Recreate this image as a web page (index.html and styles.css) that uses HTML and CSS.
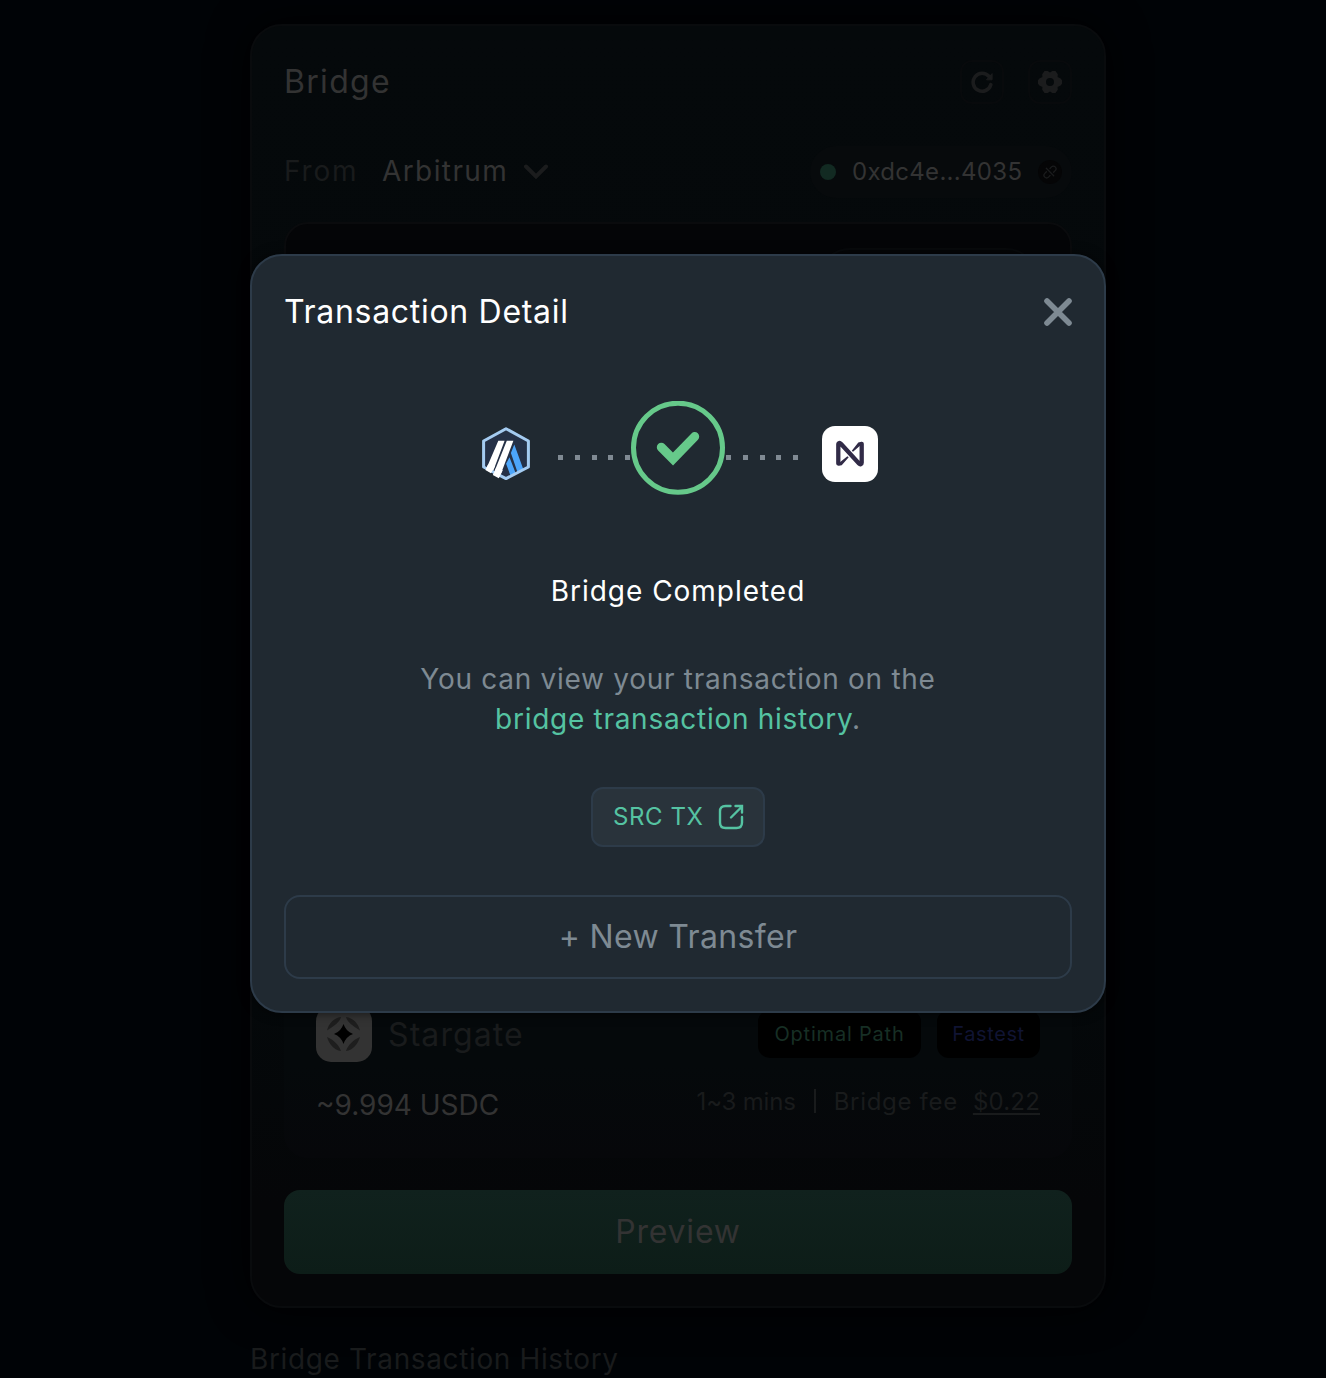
FILE: index.html
```html
<!DOCTYPE html>
<html lang="en">
<head>
<meta charset="utf-8">
<title>Bridge</title>
<link rel="stylesheet" href="styles.css">
</head>
<body>
<main class="page">
  <section class="card">
    <header class="card-head">
      <h1 class="card-title">Bridge</h1>
      <div class="tools">
        <button class="tool" aria-label="Refresh">
          <svg width="24" height="24" viewBox="0 0 24 24" fill="none" stroke="currentColor" stroke-width="3.6" stroke-linecap="round"><path d="M20.8 14.7A9 9 0 1 1 19.100 6.500"/><path d="M22.100 4v5.800h-5.200z" fill="currentColor" stroke-width="1" stroke-linejoin="round"/></svg>
        </button>
        <button class="tool" aria-label="Settings">
          <svg width="24" height="24" viewBox="0 0 24 24"><path fill="currentColor" fill-rule="evenodd" d="M6.5 1h3.2L12 2.4 14.3 1h3.2l2.3 3.2-.2 2.9 3 1.3L24 10.3v3.4l-1.4 1.9-3 1.3.2 2.9L17.500 23h-3.200L12 21.600 9.700 23H6.500l-2.300-3.200.2-2.900-3-1.300L0 13.700v-3.400l1.400-1.900 3-1.300-.2-2.900zM12 8a4 4 0 1 0 0 8 4 4 0 0 0 0-8z"/></svg>
        </button>
      </div>
    </header>
    <div class="from-row">
      <span class="from-label">From</span>
      <span class="chain">Arbitrum</span>
      <svg class="chevron" width="24" height="16" viewBox="0 0 24 16" fill="none" stroke="currentColor" stroke-width="4" stroke-linecap="round"><path d="M2 2.500l10 10 10-10"/></svg>
      <div class="wallet">
        <span class="online"></span>
        <span class="address">0xdc4e...4035</span>
        <span class="unlink"><svg width="14" height="14" viewBox="0 0 14 14" fill="none" stroke="currentColor" stroke-width="1.300" stroke-linecap="round"><path d="M7 3.500l1.500-1.600a2.600 2.600 0 0 1 3.700 3.700L10.600 7.200M7 10.500l-1.500 1.600a2.600 2.600 0 0 1-3.700-3.700L3.400 6.800M3.300 3.300l7.400 7.400"/></svg></span>
      </div>
    </div>
    <div class="amount-box"><div class="token-pill"></div></div>
    <article class="quote">
      <div class="quote-top">
        <span class="protocol">
          <svg width="56" height="56" viewBox="0 0 56 56"><rect width="56" height="56" rx="15" fill="#333"/><g fill="#1e1e1e"><path d="M11 24.500C13 17 18 12 25 11c-1 5-7 9-14 13.500zM44 24.500C42 17 37 12 30 11c1 5 7 9 14 13.500zM11 31c2 7 7 13 14 14-2-6-7-11-14-14zM44 31c-2 7-7 13-14 14 2-6 7-11 14-14z"/></g><path d="M27.500 18Q30 25.500 37 28Q30 30.500 27.500 38Q25 30.500 18 28Q25 25.500 27.500 18z" fill="#000"/></svg>
        </span>
        <span class="protocol-name">Stargate</span>
        <span class="tag tag-green">Optimal Path</span>
        <span class="tag tag-blue">Fastest</span>
      </div>
      <div class="quote-bottom">
        <span class="receive">~9.994 USDC</span>
        <span class="fees"><span class="time">1~3 mins</span><i class="bar"></i><span class="fee-label">Bridge fee</span><span class="fee">$0.22</span></span>
      </div>
    </article>
    <button class="preview">Preview</button>
  </section>
  <h2 class="history">Bridge Transaction History</h2>
</main>

<div class="overlay">
  <section class="modal" role="dialog" aria-label="Transaction Detail">
    <header class="modal-head">
      <h2 class="modal-title">Transaction Detail</h2>
      <button class="close" aria-label="Close"><svg width="28" height="28" viewBox="0 0 28 28" stroke="currentColor" stroke-width="5.600" stroke-linecap="round"><path d="M3 3l22 22M25 3L3 25"/></svg></button>
    </header>
    <div class="route">
      <svg width="56" height="56" viewBox="0 0 56 56">
        <path d="M28 2.700L50.400 15v26L28 52.600 5.600 41V15z" fill="#253147"/>
        <path fill="#fff" d="M20.300 14.700H26.600L14.600 46.500l-6.400-3.500zM28.800 14.700h6.600L21.600 51.200l-6.200-3.200z"/>
        <path fill="#4ca5fa" d="M36.300 18.500l9 24.800-5.700 3.200L32.900 27zM31.500 31.300l6.200 16-5 2.900-4.600-12.400z"/>
        <path d="M28 2.700L50.400 15v26L28 52.600 5.600 41V15z" fill="none" stroke="#a4cbf1" stroke-width="3" stroke-linejoin="round"/>
        <path fill="#fff" d="M10 38.500l-2.600 5.600 5.600 3.200 4-7zM18 42l-3.200 7 6 3.200 4-8z"/>
      </svg>
      <span class="dots"><i></i><i></i><i></i><i></i><i></i></span>
      <svg class="done" width="94" height="94" viewBox="0 0 94 94" fill="none" stroke="#66c98a"><circle cx="47" cy="46.700" r="44.500" stroke-width="5"/><path d="M30.300 46.300L42 58 63.700 35.600" stroke-width="9" stroke-linecap="round"/></svg>
      <span class="dots"><i></i><i></i><i></i><i></i><i></i></span>
      <svg width="56" height="56" viewBox="0 0 56 56"><rect width="56" height="56" rx="13" fill="#fff"/><path d="M16.300 37.600V18.500c0-1.800 1.500-2 2.600-.7L37 37.500c1.200 1.300 2.700.8 2.700-.8V17.800" fill="none" stroke="#312b47" stroke-width="4.300" stroke-linecap="round"/><path d="M16.500 39.700l3.200-.5 7-8-1.300-1-7.500 6zM39.500 15.800l-3.200.7-6.500 8.300 1.200 1 7-6z" fill="#312b47"/></svg>
    </div>
    <h3 class="status">Bridge Completed</h3>
    <p class="hint"><span class="hint-a">You can view your transaction on the</span><br><a class="hint-link">bridge transaction history</a>.</p>
    <a class="src"><span>SRC TX</span><svg width="26" height="26" viewBox="0 0 26 26" fill="none" stroke="currentColor" stroke-width="2.400" stroke-linecap="round"><path d="M12.500 2H7.500Q2 2 2 7.500v11Q2 24 7.500 24h11q5.500 0 5.500-5.500V13M13 13.500L22.500 4M17.500 2H24v6.500"/></svg></a>
    <button class="new-transfer">+ New Transfer</button>
  </section>
</div>
</body>
</html>
```
FILE: styles.css
```css
* { box-sizing: border-box; }
body {
  margin: 0;
  height: 1378px;
  overflow: hidden;
  background: #000306;
  font-family: Inter, "Liberation Sans", sans-serif;
  color: #333;
}
h1, h2, h3, p { margin: 0; font-weight: 400; }
button { font: inherit; color: inherit; background: none; padding: 0; }

.page { width: 856px; margin: 0 0 0 250px; padding-top: 24px; }
.card {
  height: 1284px;
  display: flex;
  flex-direction: column;
  padding: 32px;
  border: 2px solid #090b0d;
  border-radius: 32px;
  background: linear-gradient(#05090b, #04080a 76%, #050608 92%);
  box-shadow: 0 0 40px #000;
}
.card-head { display: flex; align-items: center; justify-content: space-between; height: 48px; }
.card-title { padding-bottom: 2px; font-size: 32px; letter-spacing: 1.3px; }
.tools { display: flex; gap: 24px; }
.tool {
  display: grid; place-items: center;
  width: 44px; height: 44px;
  border: 2px solid #080a0c;
  border-radius: 12px;
  color: #1b1c1d;
}
.from-row { display: flex; align-items: center; height: 52px; margin-top: 40px; font-size: 28px; }
.from-label { width: 98px; padding-bottom: 2px; color: #191b1c; letter-spacing: 1.8px; }
.chain { letter-spacing: 1.4px; width: 142px; padding-bottom: 2px; }
.chevron { color: #1b1c1d; }
.wallet {
  display: flex; align-items: center;
  margin-left: auto;
  width: 262px; height: 52px;
  padding: 0 10px;
  border-radius: 26px;
  background: #070a0c;
}
.online { width: 16px; height: 16px; border-radius: 50%; background: #122a22; }
.address { margin-left: 16px; padding-bottom: 1px; font-size: 24px; letter-spacing: 0.3px; }
.unlink {
  display: grid; place-items: center;
  width: 24px; height: 24px; margin-left: auto;
  border-radius: 50%;
  background: #050506;
  color: #1b1c1d;
}
.amount-box {
  height: 220px; margin-top: 24px;
  padding: 24px 32px;
  border: 2px solid #0a0b0d;
  border-radius: 24px;
  background: #040507;
}
.token-pill { width: 220px; height: 64px; margin-left: auto; border: 2px solid #080a0c; border-radius: 32px; }
.quote {
  margin-top: auto;
  height: 184px;
  padding: 32px 32px 0;
  border-radius: 24px;
  background: linear-gradient(#05090b, #05090b 50%, #06070a);
}
.quote-top { display: flex; align-items: center; height: 56px; }
.protocol { display: flex; width: 72px; }
.protocol-name { margin-right: auto; font-size: 32px; letter-spacing: 1.1px; color: #191b1c; }
.tag {
  height: 48px; line-height: 48px;
  margin-left: 16px; text-align: center;
  border-radius: 12px;
  background: #000;
  font-size: 20px;
  letter-spacing: 0.8px;
}
.tag-green { width: 163px; color: #172f25; }
.tag-blue { width: 103px; color: #101433; letter-spacing: 0.6px; }
.quote-bottom { display: flex; justify-content: space-between; align-items: center; height: 40px; margin-top: 19px; }
.receive { position: relative; top: 4px; font-size: 28px; letter-spacing: 0; }
.fees { display: flex; align-items: center; font-size: 24px; letter-spacing: 0.7px; color: #191b1c; }
.time { letter-spacing: -0.2px; }
.bar { width: 2px; height: 24px; margin: 0 18px; background: #191b1c; }
.fee { margin-left: 15px; letter-spacing: 0.2px; text-decoration: underline; text-underline-offset: 3px; text-decoration-thickness: 2px; }
.preview {
  height: 84px; margin-top: 32px; flex: none;
  border: 0; border-radius: 16px;
  padding-bottom: 2px;
  background: linear-gradient(#10211d, #0d1d18);
  font-size: 32px; letter-spacing: 0.8px;
}
.history { margin-top: 31px; font-size: 28px; line-height: 40px; letter-spacing: 0.63px; color: #191b1c; }

.overlay { position: absolute; left: 250px; top: 253.5px; width: 856px; }
.modal {
  height: 759px;
  display: flex; flex-direction: column; align-items: center;
  padding: 32px;
  border: 2px solid #2d3b49;
  border-radius: 32px;
  background: #202931;
  color: #7e8a93;
  box-shadow: 0 0 12px rgba(0, 0, 0, 0.6);
}
.modal-head { display: flex; justify-content: space-between; align-items: center; width: 100%; height: 48px; }
.modal-title { font-size: 32px; letter-spacing: 0.7px; color: #fff; }
.close { display: flex; border: 0; color: #7e8a93; }
.route { display: flex; align-items: center; width: 400px; height: 94px; margin-top: 65px; }
.route > svg { flex: none; margin-top: 12px; }
.route > .done { margin-top: 0; }
.dots { display: flex; justify-content: space-between; width: 72px; margin: 19px 1px 0 24px; }
.done + .dots { margin: 19px 24px 0 1px; }
.dots i { width: 5px; height: 5px; background: #808a93; }
.status { margin-top: 76px; font-size: 28px; line-height: 40px; letter-spacing: 0.97px; color: #fff; }
.hint { margin-top: 48px; font-size: 28px; line-height: 40px; text-align: center; letter-spacing: 0.72px; }
.hint-link { color: #55c3a2; }
.src {
  display: flex; align-items: center; justify-content: space-between;
  flex: none; width: 174px; height: 60px; margin-top: 48px; padding: 0 19px 0 20px;
  border: 2px solid #2d3b49;
  border-radius: 12px;
  background: #29333b;
  color: #55c3a2;
  font-size: 24px;
  letter-spacing: 0.6px;
}
.new-transfer {
  flex: none; width: 100%; height: 84px; margin-top: 48px;
  border: 2px solid #2d3b49;
  border-radius: 16px;
  font-size: 32px; letter-spacing: 0.35px;
}
```
